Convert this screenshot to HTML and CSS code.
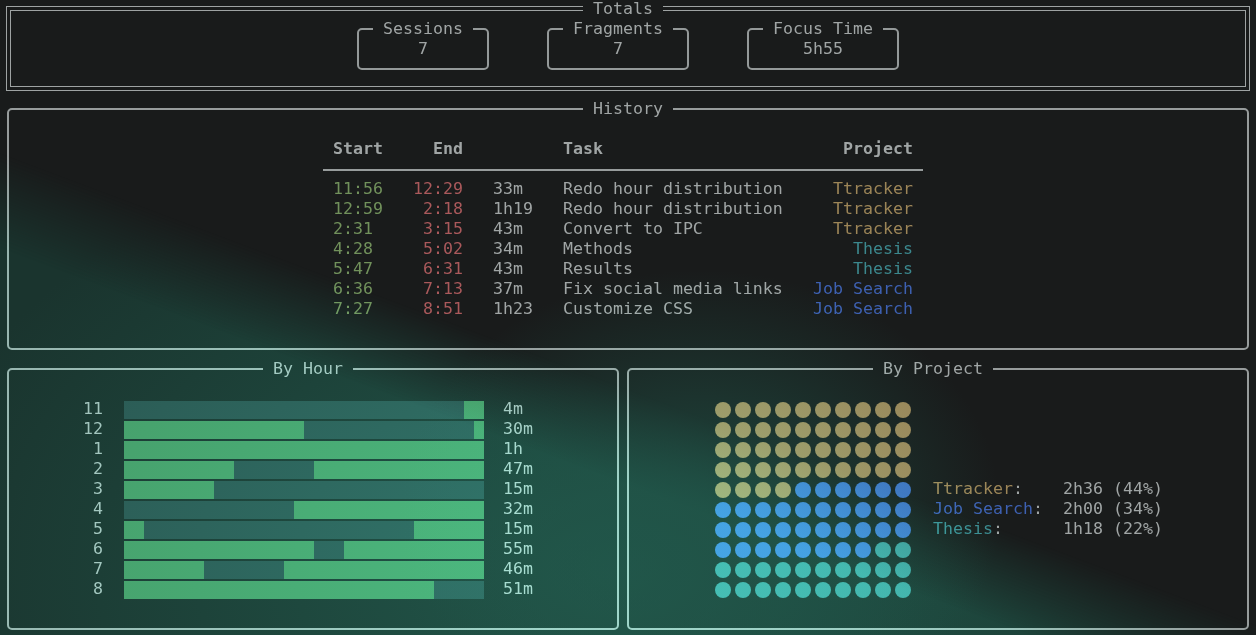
FILE: index.html
```html
<!DOCTYPE html>
<html lang="en">
<head>
<meta charset="utf-8">
<title>Ttracker report</title>
<link rel="stylesheet" href="styles.css">
</head>
<body>
<div class="screen">
  <main class="term">
    <fieldset class="totals">
      <legend class="totals-title">Totals</legend>
      <fieldset class="totals-inner">
        <legend class="ghost">Totals</legend>
        <div class="stats">
          <fieldset class="stat"><legend>Sessions</legend><div class="stat-val">7</div></fieldset>
          <fieldset class="stat"><legend>Fragments</legend><div class="stat-val">7</div></fieldset>
          <fieldset class="stat"><legend>Focus Time</legend><div class="stat-val">5h55</div></fieldset>
        </div>
      </fieldset>
    </fieldset>

    <fieldset class="panel history">
      <legend class="history-title">History</legend>
      <div class="table-wrap">
        <div class="table">
          <div class="trow thead">
            <span>Start</span><span class="r">End</span><span></span><span>Task</span><span class="r">Project</span>
          </div>
          <div class="trow"><span class="t-start">11:56</span><span class="t-end r">12:29</span><span>33m</span><span>Redo hour distribution</span><span class="r p-tt">Ttracker</span></div>
          <div class="trow"><span class="t-start">12:59</span><span class="t-end r">2:18</span><span>1h19</span><span>Redo hour distribution</span><span class="r p-tt">Ttracker</span></div>
          <div class="trow"><span class="t-start">2:31</span><span class="t-end r">3:15</span><span>43m</span><span>Convert to IPC</span><span class="r p-tt">Ttracker</span></div>
          <div class="trow"><span class="t-start">4:28</span><span class="t-end r">5:02</span><span>34m</span><span>Methods</span><span class="r p-th">Thesis</span></div>
          <div class="trow"><span class="t-start">5:47</span><span class="t-end r">6:31</span><span>43m</span><span>Results</span><span class="r p-th">Thesis</span></div>
          <div class="trow"><span class="t-start">6:36</span><span class="t-end r">7:13</span><span>37m</span><span>Fix social media links</span><span class="r p-js">Job Search</span></div>
          <div class="trow"><span class="t-start">7:27</span><span class="t-end r">8:51</span><span>1h23</span><span>Customize CSS</span><span class="r p-js">Job Search</span></div>
        </div>
      </div>
    </fieldset>

    <div class="bottom">
      <fieldset class="panel by-hour">
        <legend class="hour-title">By Hour</legend>
        <div class="hours">
          <div class="hrow"><span class="hlabel">11</span><div class="bar"><i class="off" style="width:340px"></i><i class="on" style="width:20px"></i></div><span class="hdur">4m</span></div>
          <div class="hrow"><span class="hlabel">12</span><div class="bar"><i class="on" style="width:180px"></i><i class="off" style="width:170px"></i><i class="on" style="width:10px"></i></div><span class="hdur">30m</span></div>
          <div class="hrow"><span class="hlabel">1</span><div class="bar"><i class="on" style="width:360px"></i></div><span class="hdur">1h</span></div>
          <div class="hrow"><span class="hlabel">2</span><div class="bar"><i class="on" style="width:110px"></i><i class="off" style="width:80px"></i><i class="on" style="width:170px"></i></div><span class="hdur">47m</span></div>
          <div class="hrow"><span class="hlabel">3</span><div class="bar"><i class="on" style="width:90px"></i><i class="off" style="width:270px"></i></div><span class="hdur">15m</span></div>
          <div class="hrow"><span class="hlabel">4</span><div class="bar"><i class="off" style="width:170px"></i><i class="on" style="width:190px"></i></div><span class="hdur">32m</span></div>
          <div class="hrow"><span class="hlabel">5</span><div class="bar"><i class="on" style="width:20px"></i><i class="off" style="width:270px"></i><i class="on" style="width:70px"></i></div><span class="hdur">15m</span></div>
          <div class="hrow"><span class="hlabel">6</span><div class="bar"><i class="on" style="width:190px"></i><i class="off" style="width:30px"></i><i class="on" style="width:140px"></i></div><span class="hdur">55m</span></div>
          <div class="hrow"><span class="hlabel">7</span><div class="bar"><i class="on" style="width:80px"></i><i class="off" style="width:80px"></i><i class="on" style="width:200px"></i></div><span class="hdur">46m</span></div>
          <div class="hrow"><span class="hlabel">8</span><div class="bar"><i class="on" style="width:310px"></i><i class="off" style="width:50px"></i></div><span class="hdur">51m</span></div>
        </div>
      </fieldset>

      <fieldset class="panel by-project">
        <legend class="project-title">By Project</legend>
        <div class="project-body">
          <div class="waffle">
            <i class="tt"></i><i class="tt"></i><i class="tt"></i><i class="tt"></i><i class="tt"></i><i class="tt"></i><i class="tt"></i><i class="tt"></i><i class="tt"></i><i class="tt"></i>
            <i class="tt"></i><i class="tt"></i><i class="tt"></i><i class="tt"></i><i class="tt"></i><i class="tt"></i><i class="tt"></i><i class="tt"></i><i class="tt"></i><i class="tt"></i>
            <i class="tt"></i><i class="tt"></i><i class="tt"></i><i class="tt"></i><i class="tt"></i><i class="tt"></i><i class="tt"></i><i class="tt"></i><i class="tt"></i><i class="tt"></i>
            <i class="tt"></i><i class="tt"></i><i class="tt"></i><i class="tt"></i><i class="tt"></i><i class="tt"></i><i class="tt"></i><i class="tt"></i><i class="tt"></i><i class="tt"></i>
            <i class="tt"></i><i class="tt"></i><i class="tt"></i><i class="tt"></i><i class="js"></i><i class="js"></i><i class="js"></i><i class="js"></i><i class="js"></i><i class="js"></i>
            <i class="js"></i><i class="js"></i><i class="js"></i><i class="js"></i><i class="js"></i><i class="js"></i><i class="js"></i><i class="js"></i><i class="js"></i><i class="js"></i>
            <i class="js"></i><i class="js"></i><i class="js"></i><i class="js"></i><i class="js"></i><i class="js"></i><i class="js"></i><i class="js"></i><i class="js"></i><i class="js"></i>
            <i class="js"></i><i class="js"></i><i class="js"></i><i class="js"></i><i class="js"></i><i class="js"></i><i class="js"></i><i class="js"></i><i class="th"></i><i class="th"></i>
            <i class="th"></i><i class="th"></i><i class="th"></i><i class="th"></i><i class="th"></i><i class="th"></i><i class="th"></i><i class="th"></i><i class="th"></i><i class="th"></i>
            <i class="th"></i><i class="th"></i><i class="th"></i><i class="th"></i><i class="th"></i><i class="th"></i><i class="th"></i><i class="th"></i><i class="th"></i><i class="th"></i>
          </div>
          <div class="legend-list">
            <span><b class="p-tt">Ttracker</b>:</span><span>2h36 (44%)</span>
            <span><b class="p-js">Job Search</b>:</span><span>2h00 (34%)</span>
            <span><b class="p-th">Thesis</b>:</span><span>1h18 (22%)</span>
          </div>
        </div>
      </fieldset>
    </div>
  </main>
</div>
</body>
</html>
```

FILE: styles.css
```css
* { box-sizing: border-box; }

html, body {
  margin: 0;
  padding: 0;
  background: #191b1b;
}

.screen {
  position: relative;
  isolation: isolate;
  width: 1256px;
  height: 635px;
  overflow: hidden;
  background-color: #191b1b;
  font-family: "DejaVu Sans Mono", "Liberation Mono", monospace;
  font-size: 16.6px;
  line-height: 20px;
  color: #878a8a;
}

/* green wallpaper band seen through the translucent terminal */
.screen::before,
.screen::after {
  content: "";
  position: absolute;
  inset: 0;
  pointer-events: none;
}

.screen::before {
  background: radial-gradient(ellipse 720px 460px at 620px 570px, rgb(34, 88, 75) 0%, rgb(30, 72, 62) 45%, rgb(26, 52, 46) 100%);
  -webkit-mask-image: linear-gradient(200.6deg, transparent 585px, #000 675px);
  mask-image: linear-gradient(200.6deg, transparent 585px, #000 675px);
}

.screen::after {
  background: radial-gradient(ellipse 300px 240px at 700px 510px, rgba(32, 84, 72, 0.8), rgba(32, 84, 72, 0) 100%);
}

.term {
  position: relative;
  z-index: 1;
  padding: 1px 3px 0;
  mix-blend-mode: screen;
  mix-blend-mode: plus-lighter;
}

fieldset {
  margin: 0;
  padding: 0;
  min-width: 0;
}

legend {
  padding: 0 10px;
  line-height: 20px;
}

/* ---------- Totals ---------- */
.totals {
  margin: 0 3px;
  padding: 0 3px 3px;
  border: 1px solid #858888;
}

.totals-title {
  height: 11px;
  line-height: 15.5px;
  margin-left: 573px;
}

.totals-inner {
  margin-top: -7px;
  padding: 3px 0 16px;
  border: 1px solid #858888;
}

.ghost {
  height: 11px;
  visibility: hidden;
  margin-left: 572px;
}

.stats {
  display: flex;
  justify-content: center;
  gap: 58px;
}

.stat {
  flex: none;
  padding: 0 14px 9px;
  border: 2px solid #7b7e7e;
  border-radius: 5px;
}

.stat legend {
  margin: 0;
}

.stat-val {
  text-align: center;
  margin: 0 -14px;
}

/* ---------- Panels ---------- */
.panel {
  border: 2px solid #7e8181;
  border-radius: 5px;
  padding: 20px 0 9px;
}

.history {
  margin: 8px 4px 0;
}

.history-title { margin-left: 574px; }
.hour-title { margin-left: 254px; }
.project-title { margin-left: 244px; }

.table-wrap {
  display: flex;
  justify-content: center;
  padding-right: 10px;
  height: 200px;
}

.table {
  width: 600px;
}

.trow {
  display: grid;
  grid-template-columns: 50px 50px 40px 1fr auto;
  column-gap: 30px;
  padding: 0 10px;
  height: 20px;
  white-space: pre;
}

.thead {
  box-sizing: content-box;
  height: 20px;
  padding-bottom: 10px;
  border-bottom: 2px solid #7e8181;
  margin-bottom: 8px;
  font-weight: bold;
}

.r { text-align: right; }

.t-start { color: #587640; }
.t-end { color: #913e40; }
.p-tt { color: #836a3c; }
.p-th { color: #226c72; }
.p-js { color: #244596; }

/* ---------- Bottom panels ---------- */
.bottom {
  display: grid;
  grid-template-columns: 612px 1fr;
  gap: 8px;
  margin: 9px 4px 0;
}

.by-hour, .by-project {
  padding-bottom: 29px;
}

.hours {
  height: 200px;
}

.hrow {
  display: flex;
  height: 20px;
}

.hlabel {
  width: 94px;
  text-align: right;
  margin-right: 21px;
}

.bar {
  display: flex;
  width: 360px;
  height: 18px;
  margin-top: 2px;
  margin-right: 19px;
}

.bar i { display: block; height: 100%; }
.bar .on { background: #2b6538; }
.bar .off { background: #102122; }

.project-body {
  display: flex;
  justify-content: center;
  gap: 20px;
  height: 200px;
}

.waffle {
  display: grid;
  grid-template-columns: repeat(10, 20px);
  grid-auto-rows: 20px;
  width: 200px;
}

.waffle i {
  display: block;
  width: 16px;
  height: 16px;
  margin: 3px 2px 0;
  border-radius: 50%;
}

.waffle .tt { background: #80663a; }
.waffle .js { background: #25509c; }
.waffle .th { background: #256a6c; }

.legend-list {
  display: grid;
  grid-template-columns: 130px 100px;
  grid-auto-rows: 20px;
  margin-top: 80px;
  align-self: flex-start;
  white-space: pre;
}

.legend-list b { font-weight: normal; }
```
